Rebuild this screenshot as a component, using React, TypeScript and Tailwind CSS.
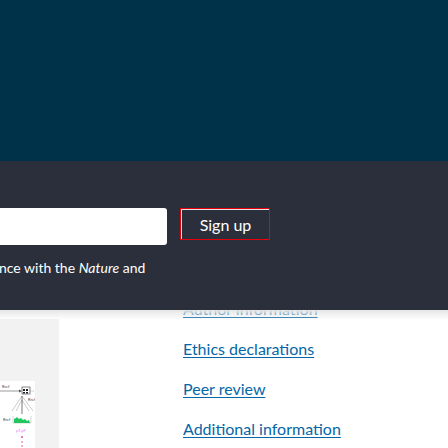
import React from "react";

function Figure() {
  return (
    <svg width="35" height="67" viewBox="0 0 35 67" className="block">
      <line x1="0" y1="10" x2="19" y2="10" stroke="#555" strokeWidth="0.6" />
      <polygon points="19,8.5 22,10 19,11.5" fill="#555" />
      <text x="2" y="7" fontSize="4" fill="#444">Rref</text>
      <rect x="22" y="6" width="8" height="7" fill="none" stroke="#333" strokeWidth="0.6" />
      <rect x="23" y="8" width="2" height="2" fill="#222" />
      <rect x="26" y="8" width="2" height="2" fill="#222" />
      <rect x="23" y="11" width="2" height="1.5" fill="#222" />
      <rect x="26" y="11" width="2" height="1.5" fill="#222" />
      <line x1="30" y1="10" x2="35" y2="10" stroke="#777" strokeWidth="0.5" strokeDasharray="1.5 1" />
      <text x="28" y="20" fontSize="4" fill="#444">Rref</text>
      <polyline points="12,30 22,15 33,30" fill="none" stroke="#aaa" strokeWidth="0.6" />
      <polyline points="16,30 22,19 29,30" fill="none" stroke="#aaa" strokeWidth="0.6" />
      <line x1="22" y1="15" x2="22" y2="33" stroke="#555" strokeWidth="0.8" />
      <text x="3" y="40" fontSize="4" fill="#444">Rref</text>
      <polyline points="13,35 13,42 31,42 31,35" fill="none" stroke="#999" strokeWidth="0.4" />
      <path d="M14 42 L14 38 L16 37 L17 36 L19 38 L21 37 L23 39 L25 38 L27 40 L29 39 L30 42 Z" fill="#22c55e" />
      <text x="16" y="51" fontSize="4" fill="#e879f9">ρT,ρF</text>
      <circle cx="22" cy="56" r="1" fill="#ec4899" />
      <circle cx="22" cy="61" r="0.8" fill="#ec4899" />
      <circle cx="22" cy="65" r="0.8" fill="#ec4899" />
    </svg>
  );
}

export default function App() {
  const font = { fontFamily: "Lato, 'Open Sans', sans-serif" };
  return (
    <div className="w-[448px] h-[448px] overflow-hidden bg-white" style={font}>
      <div className="h-[161px] bg-[#00324a]" />
      <div className="relative z-10 h-[149px] bg-[#2a2f3b] pt-[47px]">
        <div className="flex items-start">
          <div className="w-[167px] h-[37px] bg-white rounded-r-[3px]" />
          <button className="ml-[13px] w-[90px] h-[32px] border border-red-600 flex items-center justify-center">
            <span className="w-full h-full border-l border-t border-[#e5e5e5] flex items-center justify-center text-white text-[16px] leading-none">
              Sign up
            </span>
          </button>
        </div>
        <p className="mt-[14px] -ml-[1px] text-white text-[14px] leading-[18px] whitespace-nowrap">
          nce with the <i>Nature</i> and
        </p>
      </div>
      <div className="relative h-[138px] overflow-hidden">
        <div className="absolute inset-x-0 top-0 h-[10px] bg-gradient-to-b from-[#e6e6e6] to-transparent z-10" />
        <div className="flex">
          <div className="w-[59px] h-[130px] mt-[9px] bg-[#f2f2f2] pt-[62px]">
            <div className="w-[35px] h-[80px] bg-white">
              <Figure />
            </div>
          </div>
          <ul className="ml-[124px] -mt-[12px] flex flex-col gap-[18px]">
            {["Author information", "Ethics declarations", "Peer review", "Additional information"].map((t) => (
              <li key={t} className="h-[22px] leading-[22px]">
                <a href="#" className="text-[16px] text-[#0567a8] underline underline-offset-2 decoration-1 whitespace-nowrap">
                  {t}
                </a>
              </li>
            ))}
          </ul>
        </div>
      </div>
    </div>
  );
}
